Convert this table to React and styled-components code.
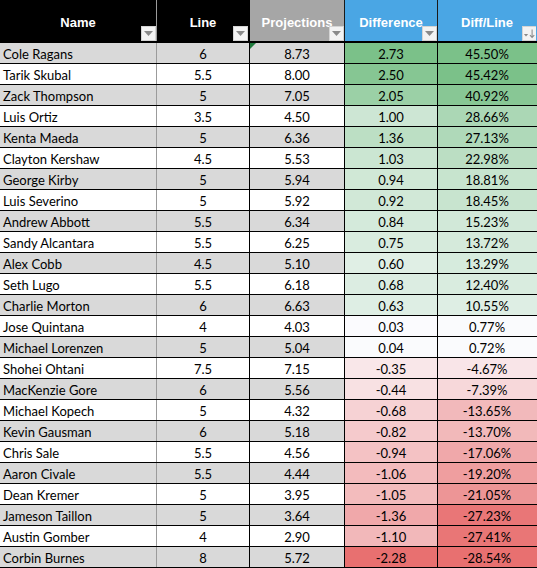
import React from "react";
import styled, { createGlobalStyle } from "styled-components";

const Global = createGlobalStyle`
  html, body { margin: 0; padding: 0; background: #ffffff; overflow: hidden; }
  #root { width: 537px; }
`;

const COLS = "157px 93px 95px 93px 99px";

const Sheet = styled.div`
  width: 537px;
  display: flex;
  flex-direction: column;
  font-family: Lato, "Liberation Sans", sans-serif;
`;

const HeaderRow = styled.div`
  display: grid;
  grid-template-columns: ${COLS};
  height: 43px;
  border-bottom: 2px solid #000;
  box-sizing: border-box;
`;

const HeaderCell = styled.div`
  position: relative;
  display: flex;
  align-items: center;
  justify-content: center;
  padding-top: 3px;
  box-sizing: border-box;
  background: ${(p) => p.$bg};
  border-right: 1px solid ${(p) => p.$line};
  color: #ffffff;
  font-family: "Liberation Sans", Arial, sans-serif;
  font-weight: bold;
  font-size: 13px;
  white-space: nowrap;
  overflow: hidden;
`;

const FilterButton = styled.div`
  position: absolute;
  right: ${(p) => p.$right}px;
  bottom: 0px;
  width: 15px;
  height: 15px;
  box-sizing: border-box;
  background: #f3f3f3;
  border: 1px solid #d4d4d4;
  display: flex;
  align-items: center;
  justify-content: center;
`;

const Row = styled.div`
  display: grid;
  grid-template-columns: ${COLS};
  height: 21px;
  box-sizing: border-box;
  border-bottom: 1px solid #000;
`;

const Cell = styled.div`
  position: relative;
  display: flex;
  align-items: center;
  justify-content: ${(p) => (p.$left ? "flex-start" : "center")};
  padding-left: ${(p) => (p.$left ? "3px" : "0")};
  padding-top: 2px;
  box-sizing: border-box;
  background: ${(p) => p.$bg};
  border-right: 1px solid ${(p) => p.$line || "#000"};
  color: #000;
  font-size: 13px;
  white-space: nowrap;
  overflow: hidden;
`;

const Flag = styled.div`
  position: absolute;
  left: 0;
  top: 0;
  width: 0;
  height: 0;
  border-top: 6px solid #1f7a3c;
  border-right: 6px solid transparent;
`;

const rows = [
  ["Cole Ragans", "6", "8.73", 2.73, 45.5],
  ["Tarik Skubal", "5.5", "8.00", 2.5, 45.42],
  ["Zack Thompson", "5", "7.05", 2.05, 40.92],
  ["Luis Ortiz", "3.5", "4.50", 1.0, 28.66],
  ["Kenta Maeda", "5", "6.36", 1.36, 27.13],
  ["Clayton Kershaw", "4.5", "5.53", 1.03, 22.98],
  ["George Kirby", "5", "5.94", 0.94, 18.81],
  ["Luis Severino", "5", "5.92", 0.92, 18.45],
  ["Andrew Abbott", "5.5", "6.34", 0.84, 15.23],
  ["Sandy Alcantara", "5.5", "6.25", 0.75, 13.72],
  ["Alex Cobb", "4.5", "5.10", 0.6, 13.29],
  ["Seth Lugo", "5.5", "6.18", 0.68, 12.4],
  ["Charlie Morton", "6", "6.63", 0.63, 10.55],
  ["Jose Quintana", "4", "4.03", 0.03, 0.77],
  ["Michael Lorenzen", "5", "5.04", 0.04, 0.72],
  ["Shohei Ohtani", "7.5", "7.15", -0.35, -4.67],
  ["MacKenzie Gore", "6", "5.56", -0.44, -7.39],
  ["Michael Kopech", "5", "4.32", -0.68, -13.65],
  ["Kevin Gausman", "6", "5.18", -0.82, -13.7],
  ["Chris Sale", "5.5", "4.56", -0.94, -17.06],
  ["Aaron Civale", "5.5", "4.44", -1.06, -19.2],
  ["Dean Kremer", "5", "3.95", -1.05, -21.05],
  ["Jameson Taillon", "5", "3.64", -1.36, -27.23],
  ["Austin Gomber", "4", "2.90", -1.1, -27.41],
  ["Corbin Burnes", "8", "5.72", -2.28, -28.54],
];

const WHITE = [252, 252, 255];
const GREEN = [123, 193, 137];
const RED = [232, 112, 112];

function scale(v, min, max) {
  let t, c;
  if (v >= 0) {
    t = Math.min(1, v / max);
    c = GREEN;
  } else {
    t = Math.min(1, v / min);
    c = RED;
  }
  const m = WHITE.map((w, i) => Math.round(w + (c[i] - w) * t));
  return `rgb(${m[0]},${m[1]},${m[2]})`;
}

const Triangle = () => (
  <svg width="9" height="5" viewBox="0 0 9 5">
    <path d="M0 0 H9 L4.5 5 Z" fill="#8a8a8a" />
  </svg>
);

const SortIcon = () => (
  <svg width="15" height="13" viewBox="0 0 15 13">
    <path d="M1 7 H6 L3.5 10 Z" fill="#8a8a8a" />
    <path d="M10.5 2 V11 M8 8.5 L10.5 11 L13 8.5" stroke="#8a8a8a" strokeWidth="1.2" fill="none" />
  </svg>
);

const headers = [
  { label: "Name", bg: "#000", line: "#9b9b9b", right: 0 },
  { label: "Line", bg: "#000", line: "#000", right: 1 },
  { label: "Projections", bg: "#a6a6a6", line: "#1a1a1a", right: 0 },
  { label: "Difference", bg: "#4aa6e4", line: "#1a1a1a", right: 0 },
  { label: "Diff/Line", bg: "#4aa6e4", line: "#4aa6e4", sort: true },
];

export default function App() {
  return (
    <>
      <Global />
      <Sheet>
        <HeaderRow>
          {headers.map((h) => (
            <HeaderCell key={h.label} $bg={h.bg} $line={h.line}>
              {h.label}
              {h.sort ? (
                <FilterButton $right={-1}>
                  <SortIcon />
                </FilterButton>
              ) : (
                <FilterButton $right={h.right}>
                  <Triangle />
                </FilterButton>
              )}
            </HeaderCell>
          ))}
        </HeaderRow>
        {rows.map(([name, line, proj, diff, pct], i) => {
          const base = i % 2 === 0 ? "#d9d9d9" : "#ffffff";
          return (
            <Row key={name}>
              <Cell $left $bg={base} $line="#9b9b9b">{name}</Cell>
              <Cell $bg={base}>{line}</Cell>
              <Cell $bg={base}>
                {i === 0 && <Flag />}
                {proj}
              </Cell>
              <Cell $bg={scale(diff, -2.28, 2.73)}>{diff.toFixed(2)}</Cell>
              <Cell $bg={scale(pct, -28.54, 45.5)} $line="transparent">
                {pct.toFixed(2)}%
              </Cell>
            </Row>
          );
        })}
      </Sheet>
    </>
  );
}
